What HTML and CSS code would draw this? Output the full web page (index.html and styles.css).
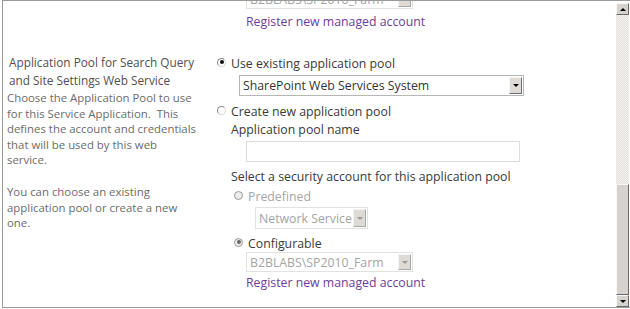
FILE: index.html
```html
<!DOCTYPE html>
<html>
<head>
<meta charset="utf-8">
<link rel="stylesheet" href="styles.css">
</head>
<body>
<div class="frame">
  <div class="content">
    <div class="inner">
      <div class="prev">
        <div class="select sel-account disabled">
          <span class="sel-text">B2BLABS\SP2010_Farm</span>
          <span class="sel-btn"><i class="tri"></i></span>
        </div>
        <a class="link" href="#">Register new managed account</a>
      </div>

      <div class="section">
        <div class="left">
          <div class="heading">Application Pool for Search Query and Site Settings Web Service</div>
          <div class="desc">Choose the Application Pool to use for this Service Application.&nbsp; This defines the account and credentials that will be used by this web service.</div>
          <div class="desc gap">You can choose an existing application pool or create a new one.</div>
        </div>
        <div class="right">
          <div class="opt opt-use">
            <span class="radio checked"></span>
            <span class="label">Use existing application pool</span>
          </div>
          <div class="select sel-pool">
            <span class="sel-text">SharePoint Web Services System</span>
            <span class="sel-btn"><i class="tri"></i></span>
          </div>
          <div class="opt opt-create">
            <span class="radio"></span>
            <span class="label">Create new application pool</span>
          </div>
          <div class="sub">
            <div class="label">Application pool name</div>
            <div class="textbox"></div>
            <div class="label">Select a security account for this application pool</div>
            <div class="opt opt-sub">
              <span class="radio dis"></span>
              <span class="label dim">Predefined</span>
            </div>
            <div class="select sel-net disabled">
              <span class="sel-text">Network Service</span>
              <span class="sel-btn"><i class="tri"></i></span>
            </div>
            <div class="opt opt-sub opt-conf">
              <span class="radio dis checked"></span>
              <span class="label">Configurable</span>
            </div>
            <div class="select sel-account disabled">
              <span class="sel-text">B2BLABS\SP2010_Farm</span>
              <span class="sel-btn"><i class="tri"></i></span>
            </div>
            <a class="link" href="#">Register new managed account</a>
          </div>
        </div>
      </div>
    </div>
  </div>
  <div class="scrollbar">
    <div class="sb-btn"><i class="sb-up"></i></div>
    <div class="sb-track"></div>
    <div class="sb-thumb"></div>
    <div class="sb-btn"><i class="sb-down"></i></div>
  </div>
</div>
</body>
</html>
```

FILE: styles.css
```css
html, body {
  margin: 0;
  padding: 0;
  background: #fff;
}
body {
  width: 630px;
  height: 309px;
  overflow: hidden;
  font-family: "Open Sans", "Noto Sans", sans-serif;
}
.frame {
  box-sizing: border-box;
  height: 308px;
  margin-left: 2px;
  display: flex;
  border-top: 1px solid #9a9a9a;
  border-bottom: 1px solid #9a9a9a;
  border-left: 1px solid #9a9a9a;
}
.content {
  flex: 1;
  overflow: hidden;
  min-width: 0;
}
.inner {
  margin-top: -12px;
}
.prev {
  padding-left: 243px;
}
.select {
  display: flex;
  align-items: center;
  box-sizing: border-box;
  border: 1px solid #c6c6c6;
  background: #fff;
  font-size: 12.3px;
  color: #333;
}
.select.disabled {
  color: #a4a4a4;
  border-color: #e2e2e2;
}
.sel-text {
  flex: 1;
  padding-left: 3px;
  white-space: nowrap;
  overflow: hidden;
}
.sel-btn {
  box-sizing: border-box;
  width: 13px;
  align-self: stretch;
  margin: 1px;
  background: #dedbd6;
  border-top: 1px solid #f4f4f4;
  border-left: 1px solid #f4f4f4;
  border-right: 1px solid #6f6f6f;
  border-bottom: 1px solid #6f6f6f;
  display: flex;
  align-items: center;
  justify-content: center;
}
.tri {
  width: 0;
  height: 0;
  border-left: 3px solid transparent;
  border-right: 3px solid transparent;
  border-top: 3px solid #000;
}
.disabled .sel-btn {
  border-right-color: #a8a8a8;
  border-bottom-color: #a8a8a8;
}
.disabled .tri {
  border-top-color: #9a9a9a;
}
.sel-account {
  width: 167px;
  height: 20px;
}
.link {
  display: block;
  color: #6b3e99;
  text-decoration: none;
  font-size: 12.3px;
  line-height: 18px;
  margin-top: 4px;
}
.section {
  display: flex;
  margin-top: 22px;
}
.left {
  width: 200px;
  padding-left: 4px;
  box-sizing: border-box;
}
.heading {
  font-size: 11.8px;
  line-height: 18px;
  color: #505050;
  padding-left: 2px;
}
.desc {
  width: 191px;
  font-size: 11.4px;
  line-height: 15.6px;
  color: #6b6b6b;
  margin-top: 1px;
}
.desc.gap {
  margin-top: 16px;
}
.right {
  padding-left: 14px;
  color: #3a3a3a;
}
.opt {
  display: flex;
  align-items: center;
  height: 18px;
}
.opt-use {
  margin-top: 2px;
}
.label {
  font-size: 12.3px;
  line-height: 18px;
  color: #3a3a3a;
  white-space: nowrap;
}
.label.dim {
  color: #a6a6a6;
}
.radio {
  box-sizing: border-box;
  width: 9px;
  height: 9px;
  border-radius: 50%;
  border: 1px solid #8a8a8a;
  border-right-color: #d8d8d8;
  border-bottom-color: #d8d8d8;
  background: #fff;
  margin-right: 5px;
  margin-top: -4px;
  position: relative;
}
.radio.checked::after {
  content: "";
  position: absolute;
  left: 1.5px;
  top: 1.5px;
  width: 4px;
  height: 4px;
  border-radius: 50%;
  background: #111;
}
.radio.dis {
  border-color: #9a9a9a;
  background: #ececec;
}
.radio.dis.checked::after {
  background: #6a6a6a;
}
.sel-pool {
  width: 285px;
  height: 21px;
  margin-left: 22px;
  margin-top: 2px;
  border-color: #b6b6b6;
}
.opt-create {
  margin-top: 7px;
}
.sub {
  padding-left: 14px;
}
.textbox {
  box-sizing: border-box;
  width: 274px;
  height: 21px;
  border: 1px solid #dcdcdc;
  margin-left: 15px;
  margin-top: 2px;
  margin-bottom: 6px;
}
.opt-sub {
  margin-left: 3px;
  margin-top: 2px;
}
.sel-net {
  width: 113px;
  height: 22px;
  margin-left: 24px;
  margin-top: 1px;
}
.opt-conf {
  margin-top: 6px;
}
.sub .sel-account {
  margin-left: 15px;
  margin-top: -1px;
}
.sub .link {
  margin-left: 15px;
  margin-top: 2px;
}
.scrollbar {
  width: 13px;
  margin: 2px 1px 0 0;
  display: flex;
  flex-direction: column;
}
.sb-btn {
  box-sizing: border-box;
  height: 12px;
  background: #d6d3ce;
  border-top: 1px solid #f8f8f8;
  border-left: 1px solid #f8f8f8;
  border-right: 1px solid #6a6a6a;
  border-bottom: 1px solid #6a6a6a;
  display: flex;
  align-items: center;
  justify-content: center;
}
.sb-up {
  width: 0;
  height: 0;
  border-left: 3px solid transparent;
  border-right: 3px solid transparent;
  border-bottom: 3px solid #000;
}
.sb-down {
  width: 0;
  height: 0;
  border-left: 3px solid transparent;
  border-right: 3px solid transparent;
  border-top: 3px solid #000;
}
.sb-track {
  height: 169px;
  background-color: #ebe9e6;
  background-image: repeating-conic-gradient(#f4f3f1 0 25%, #e2e0dc 0 50%);
  background-size: 2px 2px;
}
.sb-thumb {
  box-sizing: border-box;
  flex: 1;
  background: #d6d3ce;
  border-top: 1px solid #f8f8f8;
  border-left: 1px solid #f8f8f8;
  border-right: 1px solid #6a6a6a;
  border-bottom: 1px solid #6a6a6a;
}
```
